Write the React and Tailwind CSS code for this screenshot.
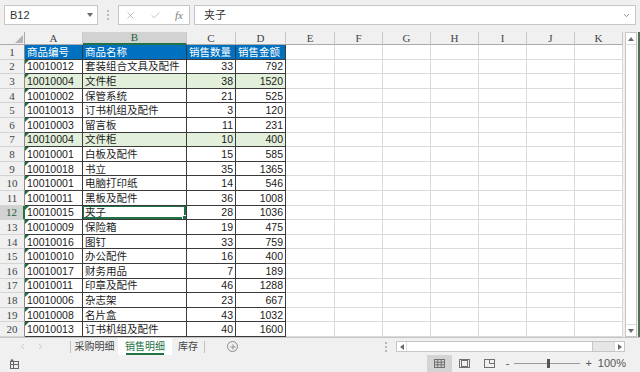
import { X, Check, ChevronDown, ChevronLeft, ChevronRight, Plus } from 'lucide-react';

const rows = [
  ['10010012', '套装组合文具及配件', 33, 792],
  ['10010004', '文件柜', 38, 1520],
  ['10010002', '保管系统', 21, 525],
  ['10010013', '订书机组及配件', 3, 120],
  ['10010003', '留言板', 11, 231],
  ['10010004', '文件柜', 10, 400],
  ['10010001', '白板及配件', 15, 585],
  ['10010018', '书立', 35, 1365],
  ['10010001', '电脑打印纸', 14, 546],
  ['10010011', '黑板及配件', 36, 1008],
  ['10010015', '夹子', 28, 1036],
  ['10010009', '保险箱', 19, 475],
  ['10010016', '图钉', 33, 759],
  ['10010010', '办公配件', 16, 400],
  ['10010017', '财务用品', 7, 189],
  ['10010011', '印章及配件', 46, 1288],
  ['10010006', '杂志架', 23, 667],
  ['10010008', '名片盒', 43, 1032],
  ['10010013', '订书机组及配件', 40, 1600],
];

const cols = ['A', 'B', 'C', 'D', 'E', 'F', 'G', 'H', 'I', 'J', 'K'];

const Tri = ({ up }) => (
  <svg width="6" height="4" viewBox="0 0 6 4">
    <path d={up ? 'M0 4 L3 0 L6 4 Z' : 'M0 0 L3 4 L6 0 Z'} fill="#6b6b6b" />
  </svg>
);

const SideTri = ({ left }) => (
  <svg width="4" height="6" viewBox="0 0 4 6">
    <path d={left ? 'M4 0 L0 3 L4 6 Z' : 'M0 0 L4 3 L0 6 Z'} fill="#6b6b6b" />
  </svg>
);

const Cell = ({ r, c }) => {
  const base = 'relative flex items-center border-b overflow-hidden whitespace-nowrap';
  // empty columns E..K
  if (c > 4) {
    return <div className={`${base} border-r border-[#dadada] bg-white`} />;
  }
  if (r === 0) {
    const labels = ['商品编号', '商品名称', '销售数量', '销售金额'];
    return (
      <div className={`${base} border-r border-r-[#3a3a3a] border-b-[#3a3a3a] bg-[#0070c0] text-white pl-[2px] pt-[1px]`}>
        {labels[c - 1]}
      </div>
    );
  }
  const row = rows[r - 1];
  const green = row[1] === '文件柜';
  const bg = green ? 'bg-[#e2efda]' : 'bg-white';
  const align = c >= 3 ? 'justify-end pr-[2px]' : 'pl-[2px]';
  return (
    <div className={`${base} ${bg} ${align} pt-[1px] border-r border-[#3a3a3a] text-[#1a1a1a]`}>
      {c === 1 && (
        <span className="absolute left-0 top-0 w-0 h-0 border-t-[4px] border-t-[#1e7145] border-r-[4px] border-r-transparent" />
      )}
      {row[c - 1]}
      {r === 11 && c === 2 && (
        <span className="absolute -left-[1px] -top-[1px] right-0 bottom-0 border-2 border-[#217346]">
          <span className="absolute -right-[4px] -bottom-[4px] w-[6px] h-[6px] bg-[#217346] border border-white" />
        </span>
      )}
    </div>
  );
};

const App = () => {
  return (
    <div className="w-[640px] h-[372px] bg-[#f0f0f0] flex flex-col overflow-hidden text-[#333] font-['Liberation_Sans','Noto_Sans_CJK_SC',sans-serif]">
      {/* Formula bar */}
      <div className="h-[32px] flex items-start pt-[5px] px-[4px] shrink-0">
        <div className="w-[94px] h-[20px] bg-white border border-[#c6c6c6] flex items-center justify-between pl-[5px] pr-[4px] text-[11px]">
          <span>B12</span>
          <Tri />
        </div>
        <div className="w-[20px] h-[20px] flex flex-col items-center justify-center gap-[2px]">
          <span className="w-[2px] h-[2px] bg-[#b8b8b8]" />
          <span className="w-[2px] h-[2px] bg-[#b8b8b8]" />
          <span className="w-[2px] h-[2px] bg-[#b8b8b8]" />
        </div>
        <div className="w-[72px] h-[20px] bg-white border border-[#c6c6c6] flex items-center justify-between px-[6px] text-[#a6a6a6]">
          <X size={11} strokeWidth={1.5} />
          <Check size={11} strokeWidth={1.5} />
          <span className="italic text-[11px] font-['Liberation_Serif',serif] text-[#7a7a7a]">fx</span>
        </div>
        <div className="ml-[4px] flex-1 h-[20px] bg-white border border-[#c6c6c6] flex items-center justify-between pl-[9px] pr-[4px] text-[11px]">
          <span>夹子</span>
          <ChevronDown size={9} className="text-[#666]" />
        </div>
      </div>

      {/* Sheet grid */}
      <div className="h-[305px] flex shrink-0">
        <div className="w-[623px] h-[305px] grid grid-cols-[25px_58px_104px_49px_50px_49px_48px_48px_48px_48px_48px_48px] grid-rows-[13px_repeat(20,minmax(0,1fr))] text-[10.5px] leading-[13px]">
          {/* header row */}
          <div className="flex items-end justify-end border-r border-b border-[#ababab] bg-[#f0f0f0] pr-[1px] pb-[1px]">
            <svg width="8" height="8" viewBox="0 0 8 8"><path d="M8 0 L8 8 L0 8 Z" fill="#b4b4b4" /></svg>
          </div>
          {cols.map((c) => (
            <div
              key={c}
              className={`flex items-center justify-center font-['Liberation_Serif',serif] text-[11px] border-r border-r-[#c8c8c8] ${
                c === 'B'
                  ? 'bg-[#d2d2d2] border-b-2 border-b-[#217346] text-[#1d5e3a]'
                  : 'bg-[#f0f0f0] border-b border-b-[#ababab] text-[#444]'
              }`}
            >
              {c}
            </div>
          ))}
          {Array.from({ length: 20 }).map((_, r) => (
            <div key={r} className="contents">
              <div
                className={`flex items-center justify-center pt-[1px] font-['Liberation_Serif',serif] text-[11px] border-b border-b-[#d4d4d4] ${
                  r === 11
                    ? 'bg-[#d2d2d2] border-r-2 border-r-[#217346] text-[#1d5e3a]'
                    : 'bg-[#f0f0f0] border-r border-r-[#8a8a8a] text-[#444]'
                }`}
              >
                {r + 1}
              </div>
              {cols.map((c, i) => (
                <Cell key={c} r={r} c={i + 1} />
              ))}
            </div>
          ))}
        </div>
        {/* vertical scrollbar */}
        <div className="ml-[2px] w-[12px] h-[305px] bg-white border border-[#c6c6c6] flex flex-col items-center justify-between">
          <div className="h-[12px] w-full flex items-center justify-center border-b border-[#dcdcdc]"><Tri up /></div>
          <div className="h-[12px] w-full flex items-center justify-center border-t border-[#dcdcdc]"><Tri /></div>
        </div>
        <div className="w-[1px]" />
        <div className="w-[2px] bg-[#4f6f59]" />
      </div>

      {/* Sheet tabs */}
      <div className="h-[18px] flex items-center shrink-0 border-t border-[#c6c6c6] text-[10px]">
        <div className="w-[70px] h-full flex items-center pl-[18px] gap-[9px] text-[#b8b8b8]">
          <ChevronLeft size={9} />
          <ChevronRight size={9} />
        </div>
        <div className="w-[1px] h-[12px] bg-[#c0c0c0]" />
        <div className="w-[47px] h-full flex items-center justify-center text-[#444]">采购明细</div>
        <div className="w-[54px] h-full flex items-center justify-center bg-white text-[#217346] relative">
          销售明细
          <span className="absolute bottom-0 left-[8px] right-[8px] h-[2px] bg-[#217346]" />
        </div>
        <div className="w-[32px] h-full flex items-center justify-center text-[#444]">库存</div>
        <div className="w-[1px] h-[12px] bg-[#c0c0c0]" />
        <div className="ml-[22px] w-[11px] h-[11px] rounded-full border border-[#8a8a8a] flex items-center justify-center text-[#6a6a6a]">
          <Plus size={8} strokeWidth={2} />
        </div>
        <div className="flex-1" />
        <div className="w-[2px] h-[10px] flex flex-col justify-between">
          <span className="w-[2px] h-[2px] bg-[#b8b8b8]" />
          <span className="w-[2px] h-[2px] bg-[#b8b8b8]" />
          <span className="w-[2px] h-[2px] bg-[#b8b8b8]" />
        </div>
        <div className="ml-[9px] w-[229px] h-[11px] flex border border-[#c6c6c6] bg-[#e6e6e6]">
          <div className="w-[10px] h-full bg-white flex items-center justify-center border-r border-[#dcdcdc]"><SideTri left /></div>
          <div className="w-[186px] h-full bg-white border-r border-[#c6c6c6]" />
          <div className="flex-1" />
          <div className="w-[10px] h-full bg-white flex items-center justify-center border-l border-[#dcdcdc]"><SideTri /></div>
        </div>
        <div className="w-[15px]" />
      </div>

      {/* Status bar */}
      <div className="h-[17px] flex items-center shrink-0 text-[11px] text-[#555]">
        <div className="pl-[10px]">
          <svg width="10" height="10" viewBox="0 0 10 10">
            <rect x="0.5" y="2.5" width="8" height="7" fill="none" stroke="#666" />
            <path d="M0.5 5.5 H8.5 M3.5 2.5 V9.5" stroke="#666" />
            <circle cx="2" cy="1.5" r="1.3" fill="#666" />
          </svg>
        </div>
        <div className="flex-1" />
        <div className="w-[25px] h-full bg-[#d4d4d4] flex items-center justify-center">
          <svg width="11" height="9" viewBox="0 0 11 9">
            <rect x="0.5" y="0.5" width="10" height="8" fill="none" stroke="#707070" />
            <path d="M0.5 3.2 H10.5 M0.5 5.8 H10.5 M3.8 0.5 V8.5 M7.2 0.5 V8.5" stroke="#707070" />
          </svg>
        </div>
        <div className="w-[25px] h-full flex items-center justify-center">
          <svg width="11" height="9" viewBox="0 0 11 9">
            <rect x="0.5" y="0.5" width="10" height="8" fill="none" stroke="#707070" />
            <rect x="2.5" y="1.5" width="6" height="6" fill="none" stroke="#707070" />
          </svg>
        </div>
        <div className="w-[25px] h-full flex items-center justify-center">
          <svg width="11" height="9" viewBox="0 0 11 9">
            <rect x="0.5" y="0.5" width="10" height="8" fill="none" stroke="#707070" />
            <path d="M5.5 0.5 V4.5 H10.5" stroke="#707070" fill="none" />
          </svg>
        </div>
        <span className="ml-[4px] text-[#555]">-</span>
        <div className="ml-[5px] w-[66px] h-[9px] relative flex items-center">
          <div className="w-full h-[1px] bg-[#9a9a9a]" />
          <div className="absolute left-[33px] top-0 w-[3px] h-[9px] bg-[#555]" />
        </div>
        <span className="ml-[5px] text-[#555]">+</span>
        <span className="ml-[6px] pr-[14px] text-[#555]">100%</span>
      </div>
    </div>
  );
};

export default App;
